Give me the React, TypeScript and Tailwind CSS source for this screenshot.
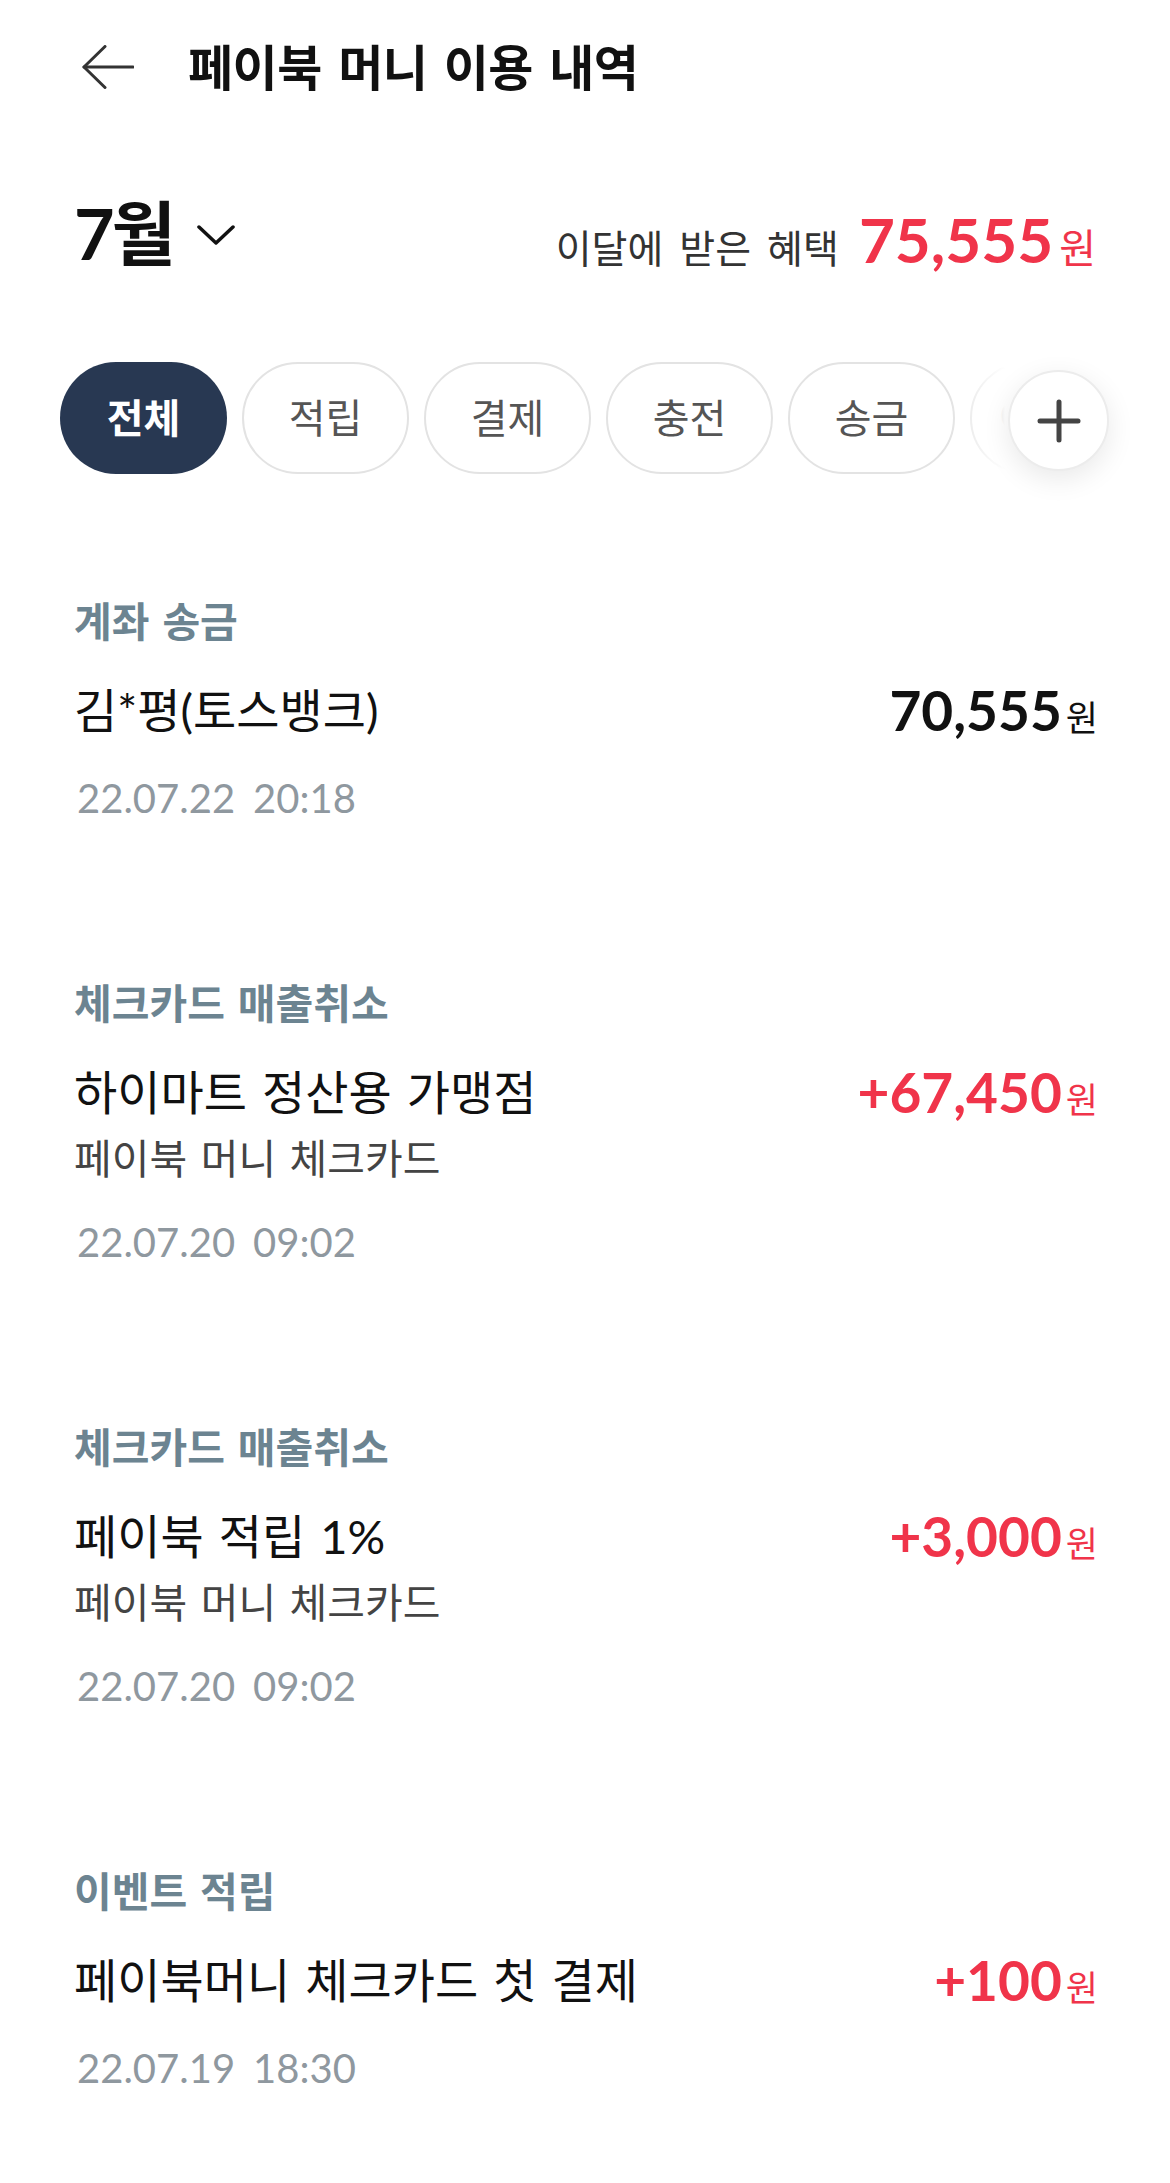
import type { ReactNode } from "react";

type Entry = {
  label: string;
  title: string;
  sub?: string;
  amount: string;
  income: boolean;
  date: string;
  time: string;
};

const ENTRIES: Entry[] = [
  { label: "계좌 송금", title: "김*평(토스뱅크)", amount: "70,555", income: false, date: "22.07.22", time: "20:18" },
  {
    label: "체크카드 매출취소",
    title: "하이마트 정산용 가맹점",
    sub: "페이북 머니 체크카드",
    amount: "+67,450",
    income: true,
    date: "22.07.20",
    time: "09:02",
  },
  {
    label: "체크카드 매출취소",
    title: "페이북 적립 1%",
    sub: "페이북 머니 체크카드",
    amount: "+3,000",
    income: true,
    date: "22.07.20",
    time: "09:02",
  },
  { label: "이벤트 적립", title: "페이북머니 체크카드 첫 결제", amount: "+100", income: true, date: "22.07.19", time: "18:30" },
];

const FILTERS = ["전체", "적립", "결제", "충전", "송금", "이벤트"];

export default function App() {
  return (
    <div className="min-h-screen w-full bg-white text-[#111] [font-family:Lato,'Noto_Sans_CJK_KR',sans-serif]">
      {/* top bar */}
      <header className="flex h-[134px] items-center pl-[82px]">
        <svg width="52" height="44" viewBox="0 0 52 44" fill="none" stroke="#333" strokeWidth="3" strokeLinecap="round" strokeLinejoin="round">
          <path d="M2 22 H51" />
          <path d="M23 1.5 L2 22 L23 42.5" />
        </svg>
        <h1 className="ml-[54px] text-[49px] font-bold leading-none tracking-[-0.5px] [word-spacing:5px]">
          페이북 머니 이용 내역
        </h1>
      </header>

      {/* month + benefit */}
      <div className="mt-[39px] flex h-[120px] items-center justify-between pl-[74px] pr-[74px]">
        <div className="flex items-center">
          <span className="text-[70px] font-bold leading-none tracking-[-3px]">7월</span>
          <svg className="ml-[24px] mt-[4px]" width="38" height="20" viewBox="0 0 38 20" fill="none" stroke="#111" strokeWidth="3.5" strokeLinecap="round" strokeLinejoin="round">
            <path d="M2 2 L19 18 L36 2" />
          </svg>
        </div>
        <div className="flex items-baseline pt-[12px]">
          <span className="text-[39px] leading-none text-[#333] [word-spacing:6px]">이달에 받은 혜택</span>
          <span className="ml-[20px] text-[62px] font-bold leading-none text-[#f0344a]">75,555</span>
          <span className="ml-[6px] text-[40px] leading-none text-[#f0344a]">원</span>
        </div>
      </div>

      {/* filter chips */}
      <div className="relative mt-[69px] h-[112px]">
        <div className="flex h-full gap-[15px] overflow-hidden pl-[60px]">
          {FILTERS.map((f, i) => (
            <div
              key={f}
              className={
                i === 0
                  ? "flex h-[112px] w-[167px] shrink-0 items-center justify-center rounded-full bg-[#283852] text-[40px] font-bold text-white"
                  : "flex h-[112px] w-[167px] shrink-0 items-center justify-center rounded-full border-2 border-[#e3e3e3] text-[40px] text-[#555]"
              }
            >
              {f}
            </div>
          ))}
        </div>
        <div className="absolute right-0 top-[-10px] h-[132px] w-[220px] bg-linear-to-r from-white/0 from-0% via-white via-25% to-white" />
        <button className="absolute right-[61px] top-[8px] flex h-[101px] w-[101px] items-center justify-center rounded-full border-2 border-[#ececec] bg-white shadow-[0_8px_28px_rgba(0,0,0,0.09)]">
          <svg width="44" height="44" viewBox="0 0 44 44" fill="none" stroke="#444" strokeWidth="5" strokeLinecap="round">
            <path d="M22 3 V41" />
            <path d="M3 22 H41" />
          </svg>
        </button>
      </div>

      {/* history list */}
      <main className="flex flex-col gap-[156px] pb-[80px] pl-[74px] pr-[72px] pt-[123px]">
        {ENTRIES.map((e, i) => (
          <HistoryItem key={i} entry={e} />
        ))}
      </main>
    </div>
  );
}

function HistoryItem({ entry }: { entry: Entry }) {
  const color = entry.income ? "text-[#f0344a]" : "text-[#111]";
  return (
    <section className="flex flex-col">
      <p className="text-[41px] font-bold leading-[50px] text-[#6c8491] [word-spacing:3px]">{entry.label}</p>
      <div className="mt-[33px] flex h-[60px] items-center justify-between">
        <p className="text-[47px] leading-[60px] [word-spacing:3px]">{entry.title}</p>
        <Amount className={color}>{entry.amount}</Amount>
      </div>
      {entry.sub && <p className="mt-[12px] text-[41px] leading-[50px] text-[#444] [word-spacing:3px]">{entry.sub}</p>}
      <p className="mt-[33px] flex gap-[18px] pl-[3px] text-[40px] leading-[50px] text-[#8f989f]">
        <span>{entry.date}</span>
        <span>{entry.time}</span>
      </p>
    </section>
  );
}

function Amount({ className, children }: { className: string; children: ReactNode }) {
  return (
    <div className={`flex items-baseline ${className}`}>
      <span className="text-[55px] font-bold leading-none">{children}</span>
      <span className="ml-[4px] text-[35px] leading-none">원</span>
    </div>
  );
}
